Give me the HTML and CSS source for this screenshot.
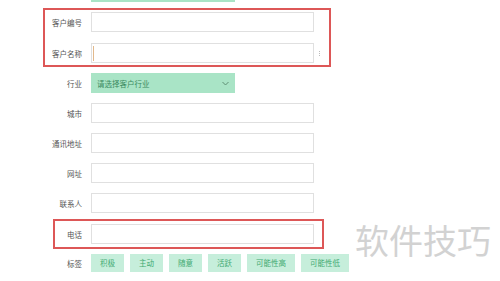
FILE: index.html
```html
<!DOCTYPE html>
<html lang="zh-CN">
<head>
  <meta charset="UTF-8" />
  <meta name="viewport" content="width=device-width, initial-scale=1" />
  <title>客户信息</title>
  <link rel="stylesheet" href="styles.css">
</head>
<body>
  <div class="form">
    <div class="row row-cut">
      <span class="label"></span>
      <div class="select"></div>
    </div>

    <!-- 红框标注 -->
    <div class="mark mark-top">
      <div class="row">
        <span class="label">客户编号</span>
        <div class="input"></div>
      </div>
      <div class="row">
        <span class="label">客户名称</span>
        <div class="input focus"><i class="caret"></i></div>
        <span class="grip"><i></i><i></i><i></i></span>
      </div>
    </div>

    <div class="row">
      <span class="label">行业</span>
      <div class="select">
        <span>请选择客户行业</span>
        <svg class="chevron" width="7" height="5" viewBox="0 0 7 5"><path d="M0.5 1 L3.5 4 L6.5 1" fill="none" stroke="#5f8f75" stroke-width="1"/></svg>
      </div>
    </div>
    <div class="row">
      <span class="label">城市</span>
      <div class="input"></div>
    </div>
    <div class="row">
      <span class="label">通讯地址</span>
      <div class="input"></div>
    </div>
    <div class="row">
      <span class="label">网址</span>
      <div class="input"></div>
    </div>
    <div class="row">
      <span class="label">联系人</span>
      <div class="input"></div>
    </div>

    <div class="mark mark-phone">
      <div class="row">
        <span class="label">电话</span>
        <div class="input"></div>
      </div>
    </div>

    <div class="row row-tags">
      <span class="label">标签</span>
      <div class="tags">
        <span class="tag">积极</span>
        <span class="tag">主动</span>
        <span class="tag">随意</span>
        <span class="tag">活跃</span>
        <span class="tag">可能性高</span>
        <span class="tag">可能性低</span>
        <span class="tag tag-more"></span>
      </div>
    </div>
  </div>

  <div class="watermark">软件技巧</div>
</body>
</html>
```

FILE: styles.css
```css
body {
  margin: 0;
  font-family: "Noto Sans CJK SC", "Noto Sans", sans-serif;
  background: #fff;
  color: #555;
  overflow: hidden;
}

.form {
  display: flex;
  flex-direction: column;
  gap: 10px;
}

.row {
  display: flex;
  align-items: center;
  height: 20px;
}

.row-cut {
  margin-top: -18px;
}

.label {
  width: 82px;
  padding-right: 9px;
  text-align: right;
  font-size: 7.5px;
  color: #555;
  flex-shrink: 0;
}

.input {
  width: 223px;
  height: 20px;
  box-sizing: border-box;
  border: 1px solid #e0e0e0;
  background: #fff;
  display: flex;
  align-items: center;
}

.caret {
  width: 1px;
  height: 15px;
  margin-left: 1px;
  background: #e2b98c;
}

.grip {
  display: flex;
  flex-direction: column;
  gap: 1px;
  margin-left: 5px;
}

.grip i {
  width: 1px;
  height: 1px;
  background: #bbb;
}

.select {
  width: 144px;
  height: 20px;
  box-sizing: border-box;
  padding: 0 6px;
  background: #a9e4c6;
  display: flex;
  align-items: center;
  justify-content: space-between;
  font-size: 7.5px;
  color: #3a8a60;
}

.mark {
  position: relative;
  display: flex;
  flex-direction: column;
  gap: 11px;
}

.mark::before {
  content: "";
  position: absolute;
  border: 2px solid #dd5757;
  pointer-events: none;
}

.mark-top::before {
  top: -4px;
  bottom: -4px;
  left: 43px;
  width: 284px;
}

.mark-phone {
  margin-top: 1px;
}

.mark-phone::before {
  top: -5px;
  bottom: -5px;
  left: 53px;
  width: 267px;
}

.row-tags {
  height: 18px;
}

.tags {
  display: flex;
  gap: 6px;
}

.tag {
  height: 18px;
  line-height: 18px;
  padding: 0 9px;
  background: #c6eedb;
  color: #3faa72;
  font-size: 7.5px;
  white-space: nowrap;
}

.tag-more {
  width: 30px;
  padding: 0;
}

.watermark {
  position: absolute;
  left: 350px;
  top: 216px;
  width: 150px;
  height: 65px;
  background: #fff;
  padding-left: 5px;
  box-sizing: border-box;
  font-size: 34px;
  line-height: 48px;
  color: #d2d2d2;
}
```
